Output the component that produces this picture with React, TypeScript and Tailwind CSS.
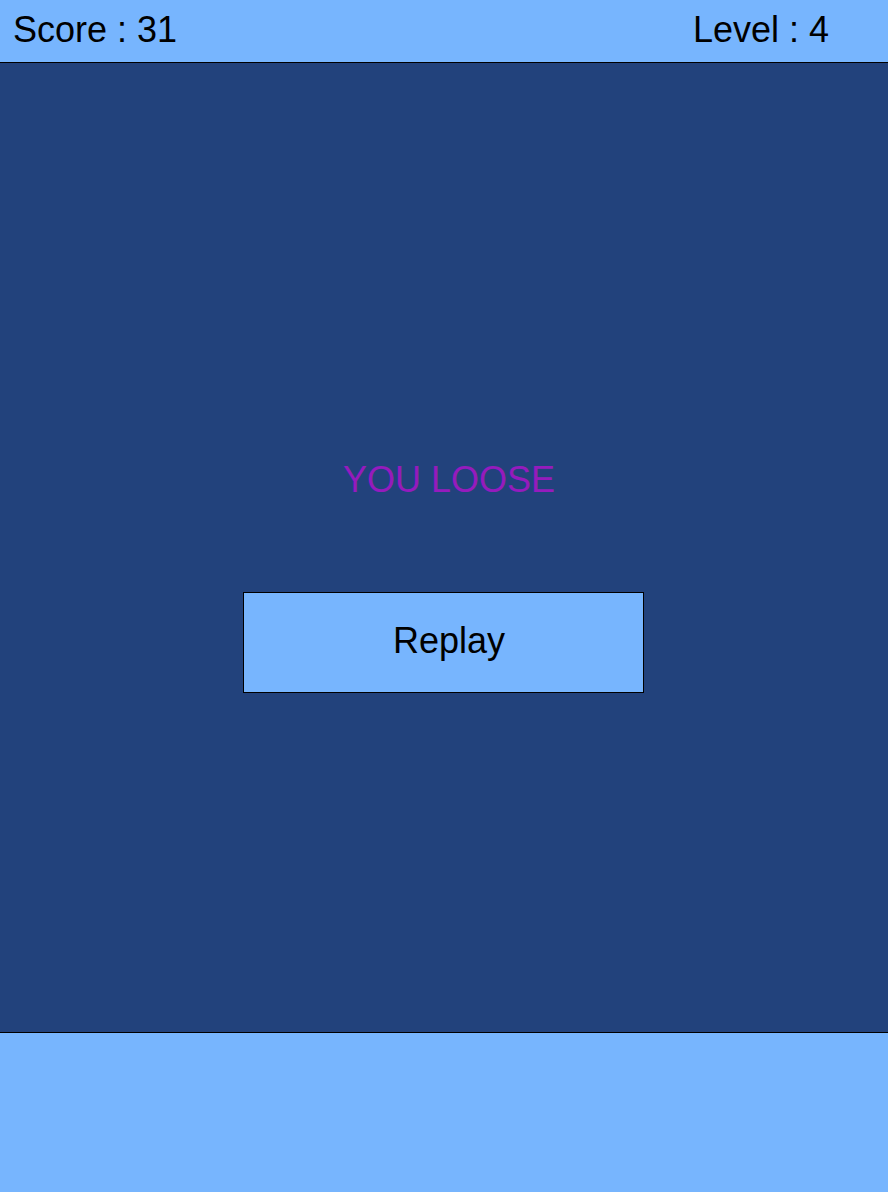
export default function App() {
  return (
    <div className="flex min-h-screen flex-col bg-[#22427c] font-['Liberation_Sans',Arial,sans-serif] text-4xl text-black">
      <header className="flex h-[63px] items-center justify-between border-b border-black bg-[#77b5fe] pr-[59px] pb-0.5 pl-[13px]">
        <p>Score : 31</p>
        <p>Level : 4</p>
      </header>
      <main className="flex flex-1 flex-col items-center justify-center gap-[92px] pt-[58px] pr-0.5">
        <h1 className="pl-3 text-[#951bbd]">YOU LOOSE</h1>
        <button
          type="button"
          className="h-[101px] w-[401px] max-w-full border border-black bg-[#77b5fe] pb-1 pl-3"
        >
          Replay
        </button>
      </main>
      <footer className="h-40 border-t border-black bg-[#77b5fe]" />
    </div>
  );
}
